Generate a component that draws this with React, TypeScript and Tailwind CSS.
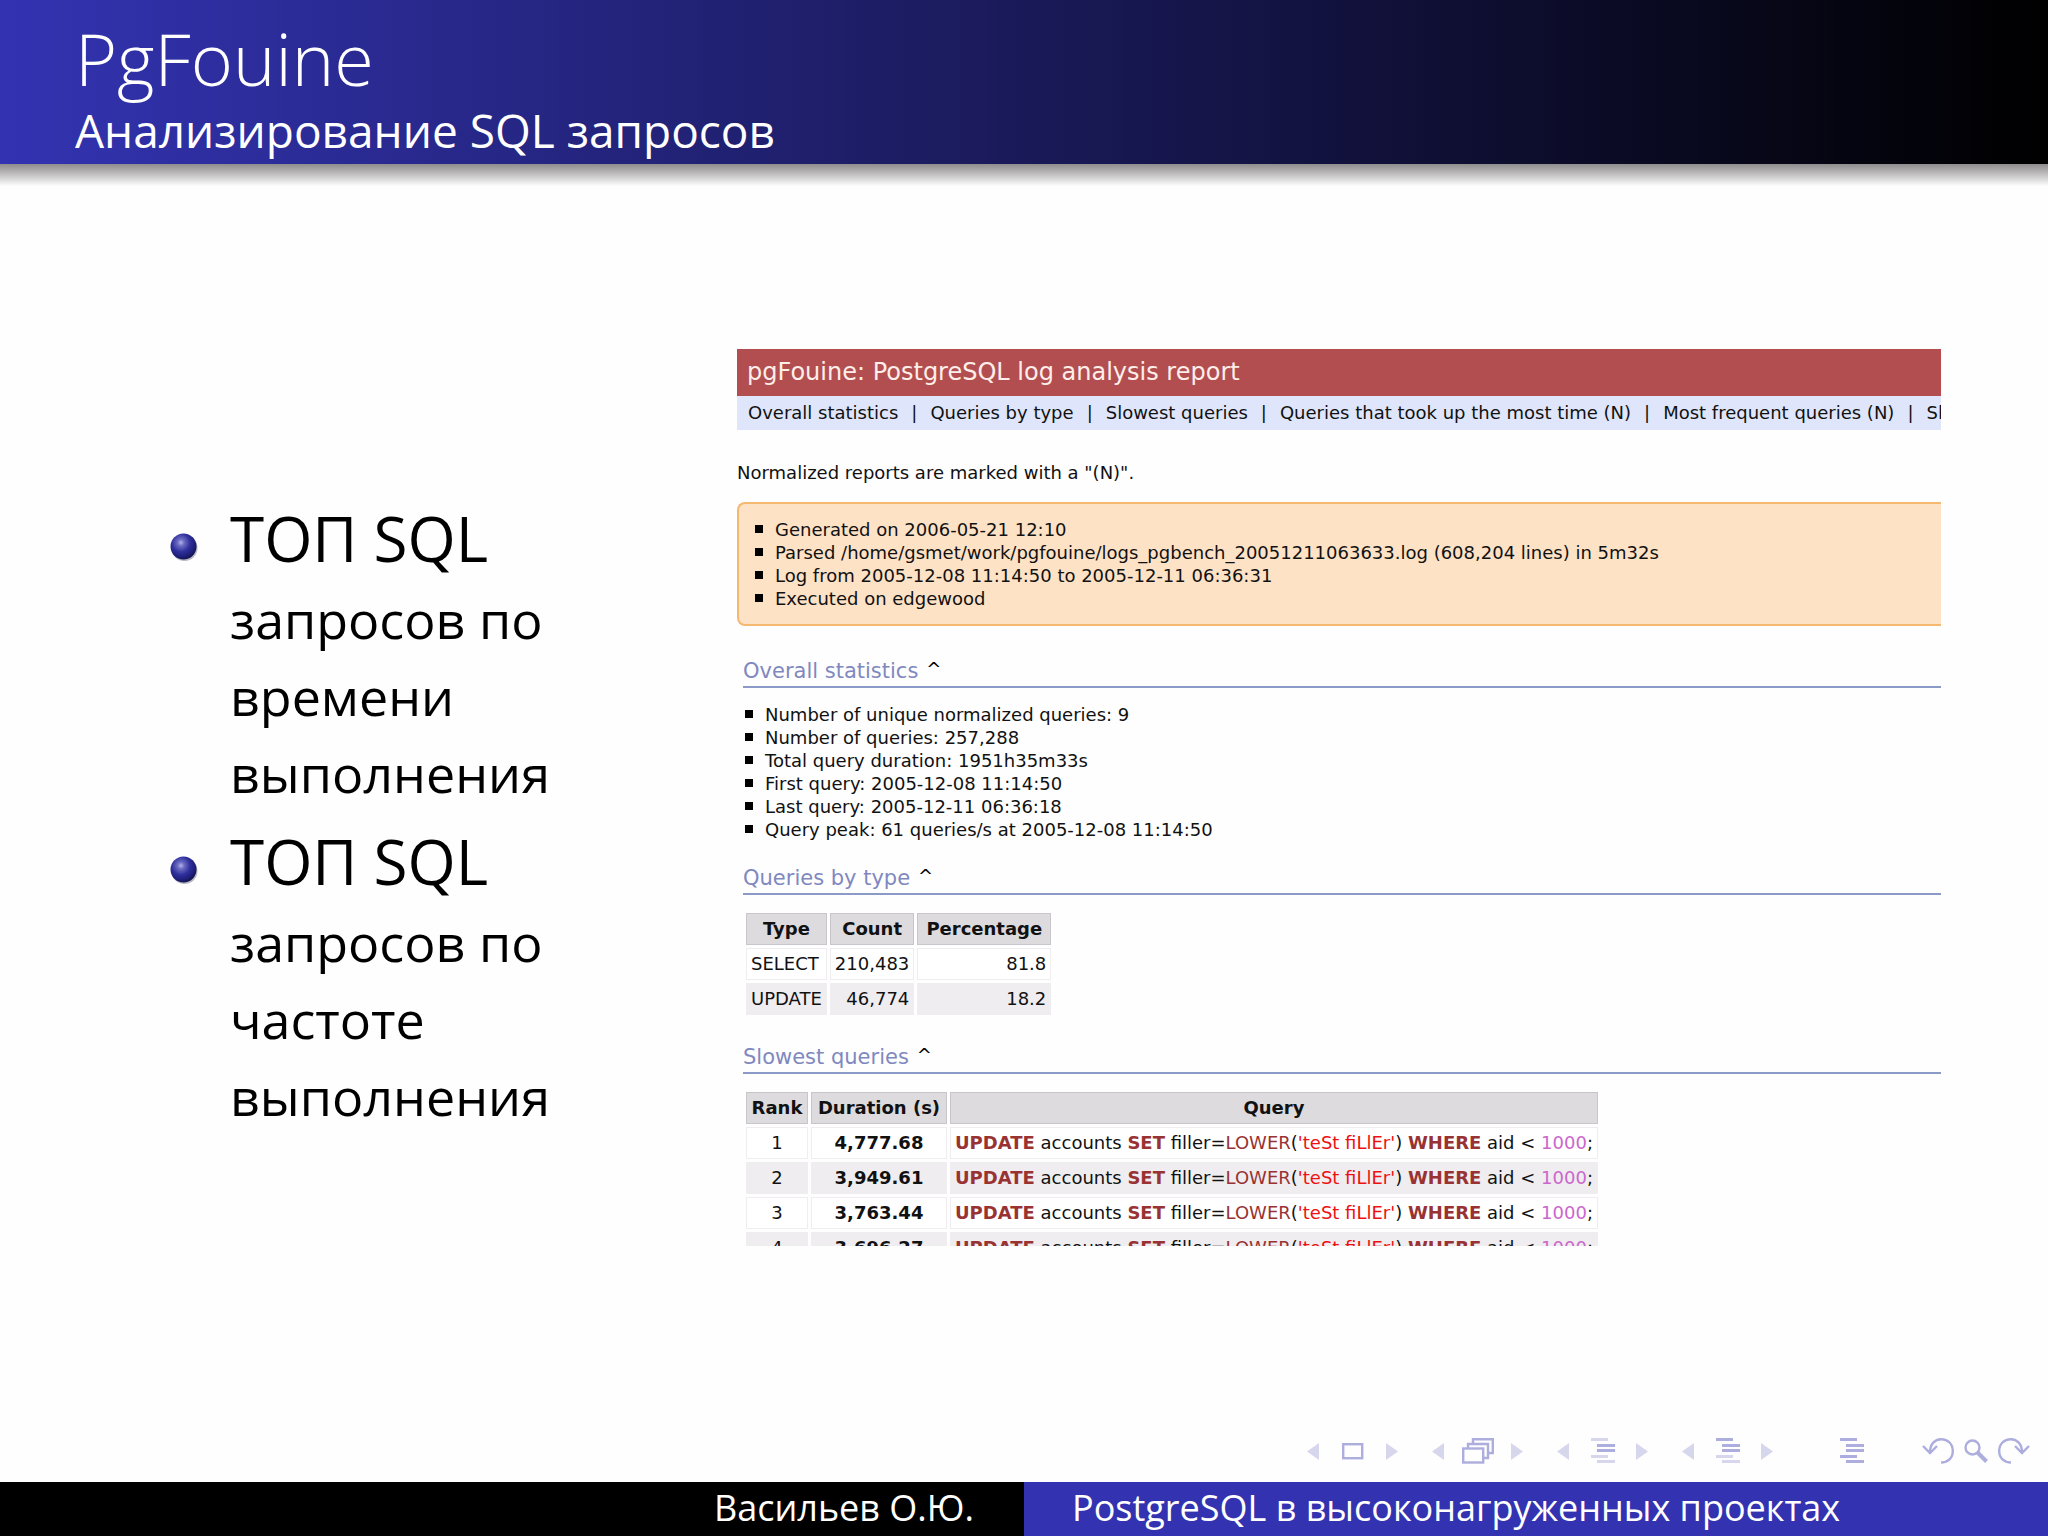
import React from "react";

const goals = [
  { lead: "ТОП SQL", rest: "запросов по времени выполнения" },
  { lead: "ТОП SQL", rest: "запросов по частоте выполнения" },
];

const menu = [
  "Overall statistics",
  "Queries by type",
  "Slowest queries",
  "Queries that took up the most time (N)",
  "Most frequent queries (N)",
  "Slowest queries (N)",
];

const runInfo = [
  "Generated on 2006-05-21 12:10",
  "Parsed /home/gsmet/work/pgfouine/logs_pgbench_20051211063633.log (608,204 lines) in 5m32s",
  "Log from 2005-12-08 11:14:50 to 2005-12-11 06:36:31",
  "Executed on edgewood",
];

const stats = [
  "Number of unique normalized queries: 9",
  "Number of queries: 257,288",
  "Total query duration: 1951h35m33s",
  "First query: 2005-12-08 11:14:50",
  "Last query: 2005-12-11 06:36:18",
  "Query peak: 61 queries/s at 2005-12-08 11:14:50",
];

const types = [
  ["SELECT", "210,483", "81.8"],
  ["UPDATE", "46,774", "18.2"],
];

const slowest = [
  ["1", "4,777.68"],
  ["2", "3,949.61"],
  ["3", "3,763.44"],
  ["4", "3,696.27"],
];

function Ball() {
  return (
    <svg viewBox="0 0 28 28" className="mt-[30px] size-7 shrink-0" aria-hidden="true">
      <defs>
        <radialGradient id="ball" cx="0.4" cy="0.35" r="0.65">
          <stop offset="0" stopColor="#b4b4e6" />
          <stop offset="0.2" stopColor="#6c6cc4" />
          <stop offset="0.55" stopColor="#2f2f9c" />
          <stop offset="0.85" stopColor="#1e1e78" />
          <stop offset="1" stopColor="#151550" />
        </radialGradient>
      </defs>
      <circle cx="14.5" cy="15" r="13" fill="#b9b9c6" />
      <circle cx="13.5" cy="13.5" r="13" fill="url(#ball)" />
    </svg>
  );
}

function SquareList({ items }: { items: string[] }) {
  return (
    <ul>
      {items.map((item) => (
        <li key={item} className="flex items-center gap-3 whitespace-nowrap">
          <span className="size-2 bg-black" />
          {item}
        </li>
      ))}
    </ul>
  );
}

function SectionTitle({ children }: { children: string }) {
  return (
    <h3 className="ml-1.5 flex h-[33px] items-start gap-2 border-b-2 border-[#8c9ac8] text-[21px] leading-8 text-[#8088c0]">
      {children}
      <a href="#top" aria-label="Back to top" className="text-lg leading-7 text-black">
        ^
      </a>
    </h3>
  );
}

const headCell = "h-8 border border-[#c8c6ca] bg-[#dedbdf] px-1 text-center font-bold";
const plainCell = "h-8 border border-[#efedf0] bg-white px-1";
const shadedCell = "h-8 border border-[#efedf0] bg-[#efedf0] px-1";

function TypeTable() {
  return (
    <table className="ml-1.5 border-separate border-spacing-[3px]">
      <thead>
        <tr>
          <th className={headCell}>Type</th>
          <th className={headCell}>Count</th>
          <th className={headCell + " w-[134px]"}>Percentage</th>
        </tr>
      </thead>
      <tbody>
        {types.map(([type, count, percent], i) => {
          const cell = i % 2 ? shadedCell : plainCell;
          return (
            <tr key={type}>
              <td className={cell}>{type}</td>
              <td className={cell + " text-right"}>{count}</td>
              <td className={cell + " text-right"}>{percent}</td>
            </tr>
          );
        })}
      </tbody>
    </table>
  );
}

function Sql() {
  return (
    <code className="font-['DejaVu_Sans',sans-serif] whitespace-nowrap">
      <b className="text-[#993333]">UPDATE</b> accounts <b className="text-[#993333]">SET</b> filler=
      <span className="text-[#993333]">LOWER</span>(<span className="text-[#ee1111]">'teSt fiLlEr'</span>){" "}
      <b className="text-[#993333]">WHERE</b> aid &lt; <span className="text-[#cc66cc]">1000</span>;
    </code>
  );
}

function SlowTable() {
  return (
    <table className="ml-1.5 border-separate border-spacing-[3px]">
      <thead>
        <tr>
          <th className={headCell + " w-[62px]"}>Rank</th>
          <th className={headCell + " w-[136px]"}>Duration (s)</th>
          <th className={headCell}>Query</th>
        </tr>
      </thead>
      <tbody>
        {slowest.map(([rank, duration], i) => {
          const cell = i % 2 ? shadedCell : plainCell;
          return (
            <tr key={rank}>
              <td className={cell + " text-center"}>{rank}</td>
              <td className={cell + " text-center font-bold"}>{duration}</td>
              <td className={cell}>
                <Sql />
              </td>
            </tr>
          );
        })}
      </tbody>
    </table>
  );
}

function Report() {
  return (
    <section
      id="report"
      className="h-[897px] min-w-0 flex-1 overflow-hidden font-['DejaVu_Sans',sans-serif] text-lg leading-[23px] text-[#111]"
    >
      <h2 className="h-[47px] bg-[#b24e50] px-2.5 text-2xl leading-[47px] text-[#fdeeea]">
        pgFouine: PostgreSQL log analysis report
      </h2>
      <nav className="flex h-[34px] items-center overflow-hidden bg-[#dfe6fb] pl-[11px] whitespace-nowrap">
        {menu.map((item, i) => (
          <React.Fragment key={item}>
            {i > 0 && <span className="px-[13px]">|</span>}
            <a href="#report">{item}</a>
          </React.Fragment>
        ))}
      </nav>
      <p className="mt-[31px]">Normalized reports are marked with a "(N)".</p>
      <div className="mt-[18px] rounded-l-lg border-2 border-r-0 border-[#f4b871] bg-[#fde2c6] py-[14px] pl-4">
        <SquareList items={runInfo} />
      </div>
      <div className="mt-[29px]">
        <SectionTitle>Overall statistics</SectionTitle>
      </div>
      <div className="mt-[15px] ml-2">
        <SquareList items={stats} />
      </div>
      <div className="mt-[21px]">
        <SectionTitle>Queries by type</SectionTitle>
      </div>
      <div className="mt-[15px]">
        <TypeTable />
      </div>
      <div className="mt-[23px]">
        <SectionTitle>Slowest queries</SectionTitle>
      </div>
      <div className="mt-[15px]">
        <SlowTable />
      </div>
    </section>
  );
}

function Tri({ dir, label }: { dir: "left" | "right"; label: string }) {
  return (
    <button type="button" aria-label={label}>
      <svg viewBox="0 0 12 17" className="h-[17px] w-3" fill="#d6d6ec">
        <path d={dir === "left" ? "M12 0V17L0 8.5Z" : "M0 0V17L12 8.5Z"} />
      </svg>
    </button>
  );
}

function Bars({ shades }: { shades: boolean[] }) {
  return (
    <svg viewBox="0 0 24 26" className="h-[26px] w-6">
      {shades.map((dark, i) => (
        <rect
          key={i}
          x={[0, 6, 6, 0, 6][i]}
          y={[0, 6, 11, 17, 22][i]}
          width={i % 3 === 0 ? 17 : 18}
          height="3"
          fill={dark ? "#adadde" : "#d6d6ec"}
        />
      ))}
    </svg>
  );
}

function Group({ name, children }: { name: string; children: React.ReactNode }) {
  return (
    <div className="flex w-[91px] items-center justify-between">
      <Tri dir="left" label={"Previous " + name} />
      <button type="button" aria-label={name}>
        {children}
      </button>
      <Tri dir="right" label={"Next " + name} />
    </div>
  );
}

function Controls() {
  const stroke = { fill: "none", stroke: "#adadde", strokeWidth: 2.4 };
  return (
    <nav aria-label="Presentation" className="flex h-[62px] items-center justify-end pr-[18px]">
      <div className="flex gap-[34px]">
        <Group name="slide">
          <svg viewBox="0 0 22 17" className="h-[17px] w-[22px]" {...stroke}>
            <rect x="1.2" y="1.2" width="19" height="14" />
          </svg>
        </Group>
        <Group name="frame">
          <svg viewBox="0 0 32 26" className="h-[26px] w-8" {...stroke}>
            <path d="M11 5V1.2H30.8V15H27" />
            <path d="M6 10V6H26V20H22" />
            <rect x="1.2" y="10.5" width="20" height="14" />
          </svg>
        </Group>
        <Group name="subsection">
          <Bars shades={[false, true, true, false, false]} />
        </Group>
        <Group name="section">
          <Bars shades={[true, true, true, false, false]} />
        </Group>
      </div>
      <button type="button" aria-label="Contents" className="mr-[58px] ml-[67px]">
        <Bars shades={[true, true, true, true, true]} />
      </button>
      <div className="flex items-center gap-2.5">
        <button type="button" aria-label="Back">
          <svg viewBox="0 0 32 26" className="h-[26px] w-8" {...stroke}>
            <path d="M1 8L8 15L15 8M8 14C8 6 13 1.2 19 1.2C26 1.2 30.8 6 30.8 13C30.8 20 26 24.5 19 24.5" />
          </svg>
        </button>
        <button type="button" aria-label="Search">
          <svg viewBox="0 0 24 24" className="size-6" {...stroke}>
            <circle cx="8.5" cy="8.5" r="7" />
            <path d="M13.5 13.5L22.5 22.5" strokeWidth="4" />
          </svg>
        </button>
        <button type="button" aria-label="Forward">
          <svg viewBox="0 0 32 26" className="h-[26px] w-8" {...stroke}>
            <path d="M31 8L24 15L17 8M24 14C24 6 19 1.2 13 1.2C6 1.2 1.2 6 1.2 13C1.2 20 6 24.5 13 24.5" />
          </svg>
        </button>
      </div>
    </nav>
  );
}

export default function App() {
  return (
    <div id="top" className="flex min-h-screen flex-col bg-[#fefefe] font-['Open_Sans',sans-serif] text-black">
      <header className="h-[164px] bg-linear-to-r/srgb from-[#3333b2] to-black pl-[75px] text-white">
        <h1 className="h-[98px] text-[72px] leading-[116px] font-[350]">PgFouine</h1>
        <p className="text-[46px] leading-[64px]">Анализирование SQL запросов</p>
      </header>
      <div className="h-[22px] bg-linear-to-b from-[#8e8c8c] to-[#fefefe]" />
      <main className="flex flex-1 items-center pr-[107px] pb-3 pl-[170px]">
        <ul className="flex w-[567px] flex-col gap-[15px] pt-[42px] text-[52px] leading-[77px]">
          {goals.map(({ lead, rest }) => (
            <li key={rest} className="flex gap-8">
              <Ball />
              <span className="w-[340px]">
                <span className="text-[62px] leading-none">{lead}</span> {rest}
              </span>
            </li>
          ))}
        </ul>
        <Report />
      </main>
      <Controls />
      <footer className="grid h-[54px] grid-cols-2 text-[36px] leading-[52px] text-white">
        <div className="bg-black pr-[50px] text-right">Васильев О.Ю.</div>
        <div className="bg-[#3333b2] pl-12">PostgreSQL в высоконагруженных проектах</div>
      </footer>
    </div>
  );
}
